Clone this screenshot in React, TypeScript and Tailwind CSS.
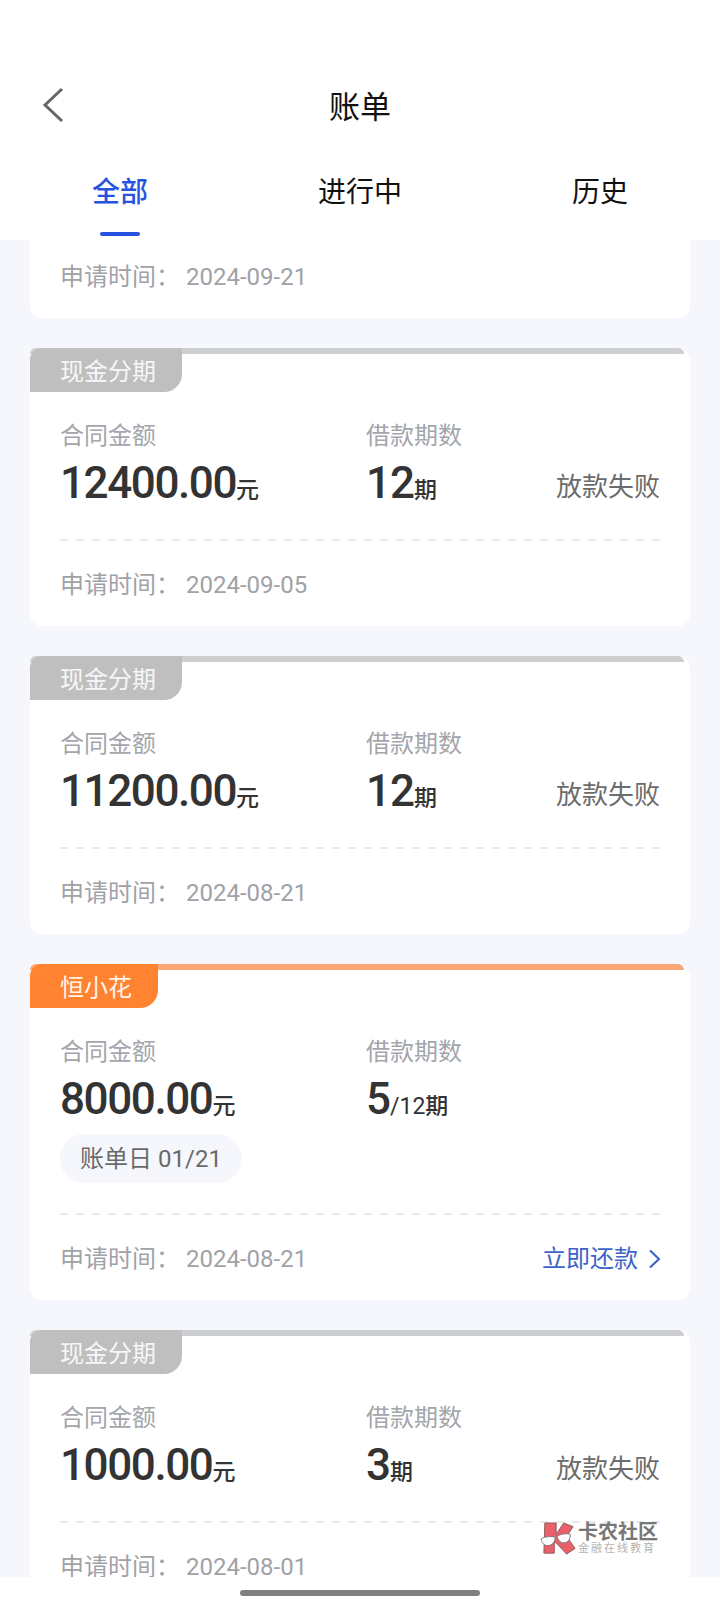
const cjk = "font-['Roboto','Noto_Sans_CJK_SC',sans-serif]";

function Divider() {
  return <div className="mt-[32px] h-[2px] bg-[repeating-linear-gradient(90deg,#e8e9eb_0,#e8e9eb_8px,transparent_8px,transparent_16px)]" />;
}

function DateRow({ date, action }: { date: string; action?: boolean }) {
  return (
    <div className="flex h-[34px] items-center justify-between text-[24px] text-[#a0a2a6]">
      <div className="flex items-center">
        <span className="w-[126px]">申请时间：</span>
        <span className="text-[24px]">{date}</span>
      </div>
      {action && (
        <div className="flex items-center text-[#3c63c9]">
          <span>立即还款</span>
          <svg width="12" height="20" viewBox="0 0 12 20" className="ml-[10px]" fill="none">
            <path d="M2 1.500 11 10l-9 8.500" stroke="#3c63c9" strokeWidth="2.200" />
          </svg>
        </div>
      )}
    </div>
  );
}

type Bill = {
  tag: string;
  orange?: boolean;
  amount: string;
  period: string;
  total?: string;
  status?: string;
  billDay?: string;
  date: string;
};

const bills: Bill[] = [
  { tag: '现金分期', amount: '12400.00', period: '12', status: '放款失败', date: '2024-09-05' },
  { tag: '现金分期', amount: '11200.00', period: '12', status: '放款失败', date: '2024-08-21' },
  { tag: '恒小花', orange: true, amount: '8000.00', period: '5', total: '/12', billDay: '账单日 01/21', date: '2024-08-21' },
  { tag: '现金分期', amount: '1000.00', period: '3', status: '放款失败', date: '2024-08-01' },
];

function BillCard({ bill }: { bill: Bill }) {
  return (
    <div className="relative shrink-0 rounded-[12px] bg-white">
      <div className={`absolute top-0 left-0 h-[6px] w-[654px] rounded-t-[8px] ${bill.orange ? 'bg-[#fca677]' : 'bg-[#cdcecf]'}`} />
      <div className={`relative flex h-[44px] w-fit items-center rounded-tl-[12px] rounded-br-[18px] pt-[4px] pr-[26px] pl-[30px] text-[24px] ${bill.orange ? 'bg-[#ff8331] text-[#fff5ec]' : 'bg-[#bfbfc0] text-[#f7f7f7]'}`}>
        {bill.tag}
      </div>
      <div className="px-[30px] pt-[27px] pb-[24px]">
        <div className="flex h-[34px] items-center text-[24px] text-[#a3a6ab]">
          <span className="w-[306px]">合同金额</span>
          <span>借款期数</span>
        </div>
        <div className="mt-[6px] flex h-[48px] items-baseline leading-[48px] text-[#333333]">
          <div className="w-[306px] font-medium">
            <span className="text-[44px] tracking-[-1.400px]">{bill.amount}</span>
            <span className="text-[23px]">元</span>
          </div>
          <div className="font-medium">
            <span className="text-[44px] tracking-[-1px]">{bill.period}</span>
            {bill.total && <span className="text-[23px] font-normal">{bill.total}</span>}
            <span className="text-[23px]">期</span>
          </div>
          {bill.status && <span className="ml-auto -translate-y-[2px] text-[26px] text-[#6b6b6b]">{bill.status}</span>}
        </div>
        {bill.billDay && (
          <div className="mt-[11px] -mb-[2px] flex h-[49px] w-[182px] items-center justify-center rounded-full bg-[#f5f7fc] text-[24px] text-[#6a6a6a]">
            {bill.billDay}
          </div>
        )}
        <Divider />
        <div className="mt-[27px]">
          <DateRow date={bill.date} action={bill.orange} />
        </div>
      </div>
    </div>
  );
}

function Watermark() {
  return (
    <div className="absolute top-[1522px] left-[540px] flex items-center">
      <svg width="38" height="34" viewBox="0 0 40 36">
        <path d="M5 1h12v12l8-12 10 4-7 10 9 13-9 6-11-12-2 0v11l-11 0z" fill="#e9606b" stroke="#8a5a5a" strokeWidth="1" />
        <path d="M1 18c4-3 11-3 15-2 0 5-3 9-8 9-4 0-6-3-7-7z" fill="#ffffff" stroke="#777777" strokeWidth="1" />
        <path d="M18 15c5-3 11-3 14-2 0 5-2 9-7 9-4 0-6-3-7-7z" fill="#ffffff" stroke="#777777" strokeWidth="1" />
      </svg>
      <div className="flex flex-col items-start">
        <span className="text-[20px] leading-[20px] font-bold text-[#777777]">卡农社区</span>
        <span className="text-[11px] leading-[14px] tracking-[2px] text-[#b3b3b3]">金融在线教育</span>
      </div>
    </div>
  );
}

export default function App() {
  return (
    <div className={`relative flex h-[1608px] w-[720px] flex-col overflow-hidden bg-white ${cjk}`}>
      <header className="h-[240px] shrink-0 bg-white">
        <div className="flex h-[143px] items-end">
          <div className="relative flex h-[70px] w-full items-center justify-center text-[31px] text-[#111111]">
            <svg width="22" height="36" viewBox="0 0 22 36" className="absolute top-[14px] left-[42px]" fill="none">
              <path d="M20 2 3 18l17 16" stroke="#666666" strokeWidth="3" />
            </svg>
            账单
          </div>
        </div>
        <nav className="flex h-[97px]">
          <div className="flex flex-1 flex-col items-center">
            <span className="mt-[30px] text-[28px] leading-[40px] font-medium text-[#2553e0]">全部</span>
            <span className="mt-[19px] h-[4px] w-[40px] rounded-full bg-[#2553e0]" />
          </div>
          <div className="flex-1 pt-[30px] text-center text-[28px] leading-[40px] text-[#111111]">进行中</div>
          <div className="flex-1 pt-[30px] text-center text-[28px] leading-[40px] text-[#111111]">历史</div>
        </nav>
      </header>

      <main className="flex h-[1337px] shrink-0 flex-col gap-[30px] overflow-hidden bg-[#f5f7fc] px-[30px]">
        <div className="shrink-0 rounded-b-[12px] bg-white px-[30px] pt-[20px] pb-[24px]">
          <DateRow date="2024-09-21" />
        </div>
        {bills.map((b) => (
          <BillCard key={b.amount} bill={b} />
        ))}
      </main>

      <div className="flex flex-1 items-center justify-center bg-white">
        <div className="h-[6px] w-[240px] rounded-full bg-[#808080]" />
      </div>
      <Watermark />
    </div>
  );
}
